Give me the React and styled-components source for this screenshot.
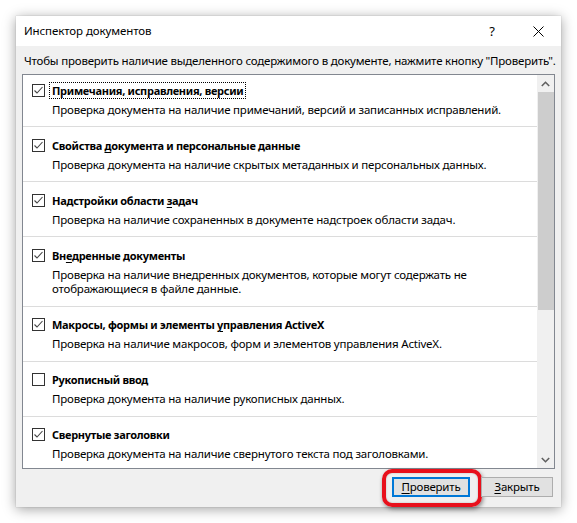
import React from "react";
import styled, { createGlobalStyle } from "styled-components";

const Global = createGlobalStyle`
  html, body { margin: 0; padding: 0; background: #ffffff; }
  body {
    font-family: "Segoe UI", "Noto Sans", "Open Sans", sans-serif;
    font-size: 11.5px;
    letter-spacing: -0.2px;
    color: #000;
  }
`;

const Page = styled.div`
  padding: 16px 0 0 16px;
  width: 577px;
  height: 523px;
  box-sizing: border-box;
`;

const Dialog = styled.div`
  width: 545px;
  height: 491px;
  display: flex;
  flex-direction: column;
  background: #f0f0f0;
  box-shadow: 0 2px 12px rgba(0, 0, 0, 0.38), 0 0 1px rgba(0, 0, 0, 0.25);
`;

const TitleBar = styled.div`
  height: 30px;
  flex: none;
  display: flex;
  align-items: center;
  background: #ffffff;
`;

const TitleText = styled.div`
  flex: 1;
  padding-left: 8px;
  line-height: 16px;
  font-size: 11.5px;
  letter-spacing: -0.1px;
`;

const TitleButton = styled.div`
  width: 46px;
  height: 30px;
  display: flex;
  align-items: center;
  justify-content: center;
  font-size: 13px;
  color: #000;
`;

const Body = styled.div`
  flex: 1;
  display: flex;
  flex-direction: column;
  padding: 7px 6px 10px 6px;
  min-height: 0;
`;

const Instruction = styled.div`
  padding-left: 2px;
  line-height: 16px;
  white-space: nowrap;
`;

const ListBox = styled.div`
  margin-top: 5px;
  height: 395px;
  box-sizing: border-box;
  border: 1px solid #828790;
  background: #ffffff;
  display: flex;
`;

const ListContent = styled.div`
  flex: 1;
  overflow: hidden;
`;

const Row = styled.div`
  padding: ${(p) => (p.$first ? "6px" : "9px")} 0 9px 9px;
  border-bottom: 1px solid #dcdcdc;
`;

const RowHead = styled.div`
  display: flex;
  align-items: center;
  height: 18px;
  gap: 7px;
`;

const Box = styled.div`
  width: 13px;
  height: 13px;
  box-sizing: border-box;
  border: 1px solid #333333;
  background: #ffffff;
  display: flex;
  align-items: center;
  justify-content: center;
  flex: none;
`;

const Label = styled.span`
  font-weight: 700;
  font-size: 11px;
  letter-spacing: -0.3px;
  line-height: 15px;
  white-space: nowrap;
  padding: 0 2px;
  margin-left: -2px;
  outline: ${(p) => (p.$focused ? "1px dotted #000" : "none")};
`;

const Desc = styled.div`
  margin-top: 3.5px;
  padding-left: 20px;
  line-height: 14.5px;
  white-space: nowrap;
`;

const U = styled.span`
  text-decoration: underline;
  text-underline-offset: 2px;
`;

const ScrollBar = styled.div`
  width: 17px;
  flex: none;
  background: #f0f0f0;
  display: flex;
  flex-direction: column;
`;

const ScrollArrow = styled.div`
  height: 17px;
  flex: none;
  display: flex;
  align-items: center;
  justify-content: center;
`;

const Thumb = styled.div`
  height: 218px;
  margin-left: 1px;
  width: 16px;
  background: #cdcdcd;
`;

const Track = styled.div`
  flex: 1;
`;

const ButtonRow = styled.div`
  margin-top: 8px;
  display: flex;
  justify-content: flex-end;
  gap: 11px;
  padding-right: 2px;
`;

const ButtonWrap = styled.div`
  position: relative;
`;

const Button = styled.div`
  height: 20px;
  width: ${(p) => p.$w}px;
  box-sizing: border-box;
  background: #e1e1e1;
  border: ${(p) => (p.$default ? "2px solid #0078d7" : "1px solid #adadad")};
  display: flex;
  align-items: center;
  justify-content: center;
  line-height: 16px;
  white-space: nowrap;
`;

const Highlight = styled.div`
  position: absolute;
  left: -10px;
  right: -12px;
  top: -8px;
  bottom: -10px;
  border: 4px solid #e8101c;
  border-radius: 10px;
  box-shadow: 1px 2px 4px rgba(0, 0, 0, 0.45), inset 0 0 2px rgba(0, 0, 0, 0.25);
  pointer-events: none;
`;

const Check = () => (
  <svg width="11" height="11" viewBox="0 0 11 11">
    <path d="M1.5 5.5 L4 8 L9.5 2" fill="none" stroke="#444" strokeWidth="1.1" />
  </svg>
);

const Chevron = ({ up }) => (
  <svg width="9" height="6" viewBox="0 0 9 6">
    <path
      d={up ? "M0.8 5 L4.5 1.3 L8.2 5" : "M0.8 1 L4.5 4.7 L8.2 1"}
      fill="none"
      stroke="#606060"
      strokeWidth="1.6"
    />
  </svg>
);

const items = [
  {
    title: "Примечания, исправления, версии",
    desc: "Проверка документа на наличие примечаний, версий и записанных исправлений.",
    checked: true,
    focused: true,
  },
  {
    title: (
      <>
        Свойства <U>д</U>окумента и персональные данные
      </>
    ),
    desc: "Проверка документа на наличие скрытых метаданных и персональных данных.",
    checked: true,
  },
  {
    title: (
      <>
        Надстройки области <U>з</U>адач
      </>
    ),
    desc: "Проверка на наличие сохраненных в документе надстроек области задач.",
    checked: true,
  },
  {
    title: (
      <>
        Вн<U>е</U>дренные документы
      </>
    ),
    desc: (
      <>
        Проверка на наличие внедренных документов, которые могут содержать не
        <br />
        отображающиеся в файле данные.
      </>
    ),
    checked: true,
  },
  {
    title: (
      <>
        Макросы, формы и элементы <U>у</U>правления ActiveX
      </>
    ),
    desc: "Проверка на наличие макросов, форм и элементов управления ActiveX.",
    checked: true,
  },
  {
    title: "Рукописный ввод",
    desc: "Проверка документа на наличие рукописных данных.",
    checked: false,
  },
  {
    title: "Свернутые заголовки",
    desc: "Проверка документа на наличие свернутого текста под заголовками.",
    checked: true,
  },
];

export default function App() {
  return (
    <>
      <Global />
      <Page>
        <Dialog>
          <TitleBar>
            <TitleText>Инспектор документов</TitleText>
            <TitleButton>?</TitleButton>
            <TitleButton>
              <svg width="11" height="11" viewBox="0 0 11 11">
                <path d="M0.5 0.5 L10.5 10.5 M10.5 0.5 L0.5 10.5" stroke="#000" strokeWidth="1" />
              </svg>
            </TitleButton>
          </TitleBar>
          <Body>
            <Instruction>
              Чтобы проверить наличие выделенного содержимого в документе, нажмите кнопку "Проверить".
            </Instruction>
            <ListBox>
              <ListContent>
                {items.map((it, i) => (
                  <Row key={i} $first={i === 0}>
                    <RowHead>
                      <Box>{it.checked && <Check />}</Box>
                      <Label $focused={it.focused}>{it.title}</Label>
                    </RowHead>
                    <Desc>{it.desc}</Desc>
                  </Row>
                ))}
              </ListContent>
              <ScrollBar>
                <ScrollArrow>
                  <Chevron up />
                </ScrollArrow>
                <Thumb />
                <Track />
                <ScrollArrow>
                  <Chevron />
                </ScrollArrow>
              </ScrollBar>
            </ListBox>
            <ButtonRow>
              <ButtonWrap>
                <Button $default $w={78}>
                  <span>
                    <U>П</U>роверить
                  </span>
                </Button>
                <Highlight />
              </ButtonWrap>
              <ButtonWrap>
                <Button $w={72}>
                  <span>
                    <U>З</U>акрыть
                  </span>
                </Button>
              </ButtonWrap>
            </ButtonRow>
          </Body>
        </Dialog>
      </Page>
    </>
  );
}
